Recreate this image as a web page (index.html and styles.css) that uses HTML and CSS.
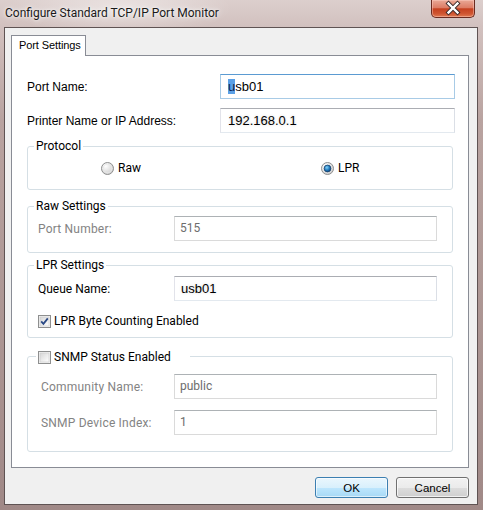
FILE: index.html
```html
<!DOCTYPE html>
<html>
<head>
<meta charset="utf-8">
<link rel="stylesheet" href="styles.css">
</head>
<body>
<div class="window">
  <div class="titlebar">
    <span class="title">Configure Standard TCP/IP Port Monitor</span>
    <div class="close">
      <svg width="44" height="18" viewBox="0 0 44 18">
        <path d="M17.5 4.5 L26.5 13.5 M26.5 4.5 L17.5 13.5" stroke="#3a2a2a" stroke-width="4.2" stroke-linecap="square" fill="none"/>
        <path d="M17.5 4.5 L26.5 13.5 M26.5 4.5 L17.5 13.5" stroke="#ffffff" stroke-width="2.4" stroke-linecap="square" fill="none"/>
      </svg>
    </div>
  </div>
  <div class="client">
    <div class="tabs"><div class="tab">Port Settings</div></div>
    <div class="panel">
      <div class="row">
        <span class="label sans">Port Name:</span>
        <div class="input focus wide"><span class="sel">u</span>sb01</div>
      </div>
      <div class="row row2">
        <span class="label sans">Printer Name or IP Address:</span>
        <div class="input wide blur">192.168.0.1</div>
      </div>

      <fieldset class="group protocol">
        <legend>Protocol</legend>
        <div class="radios">
          <label class="opt">
            <svg width="13" height="13" viewBox="0 0 13 13">
              <defs>
                <radialGradient id="rg" cx="0.35" cy="0.3" r="0.8">
                  <stop offset="0" stop-color="#ffffff"/>
                  <stop offset="1" stop-color="#c9c9c9"/>
                </radialGradient>
              </defs>
              <circle cx="6.5" cy="6.5" r="6" fill="url(#rg)" stroke="#8e8f8f"/>
              <circle cx="6.5" cy="6.5" r="4.3" fill="none" stroke="#e8e8e8" stroke-width="0.8"/>
            </svg>
            <span>Raw</span>
          </label>
          <label class="opt">
            <svg width="13" height="13" viewBox="0 0 13 13">
              <defs>
                <radialGradient id="rb" cx="0.4" cy="0.35" r="0.7">
                  <stop offset="0" stop-color="#7fd2f9"/>
                  <stop offset="0.6" stop-color="#1e74b8"/>
                  <stop offset="1" stop-color="#0d3f70"/>
                </radialGradient>
              </defs>
              <circle cx="6.5" cy="6.5" r="6" fill="url(#rg)" stroke="#8e8f8f"/>
              <circle cx="6.5" cy="6.5" r="3.4" fill="url(#rb)" stroke="#19426e" stroke-width="0.8"/>
            </svg>
            <span>LPR</span>
          </label>
        </div>
      </fieldset>

      <fieldset class="group raw">
        <legend>Raw Settings</legend>
        <div class="grow">
          <span class="dim">Port Number:</span>
          <div class="input disabled">515</div>
        </div>
      </fieldset>

      <fieldset class="group lpr">
        <legend>LPR Settings</legend>
        <div class="grow">
          <span>Queue Name:</span>
          <div class="input blur val">usb01</div>
        </div>
        <label class="check">
          <svg width="13" height="13" viewBox="0 0 13 13">
            <defs>
              <linearGradient id="cg" x1="0" y1="0" x2="1" y2="1">
                <stop offset="0" stop-color="#d6d6d6"/>
                <stop offset="1" stop-color="#ffffff"/>
              </linearGradient>
            </defs>
            <rect x="0.5" y="0.5" width="12" height="12" fill="#f4f4f4" stroke="#8e8f8f"/>
            <rect x="2" y="2" width="9" height="9" fill="url(#cg)" stroke="#c9c9c9" stroke-width="0.6"/>
            <path d="M3.2 6.4 L5.4 8.8 L9.8 3.4" stroke="#2b4a86" stroke-width="1.8" fill="none"/>
          </svg>
          <span>LPR Byte Counting Enabled</span>
        </label>
      </fieldset>

      <fieldset class="group snmp">
        <legend>
          <label class="check">
            <svg width="13" height="13" viewBox="0 0 13 13">
              <rect x="0.5" y="0.5" width="12" height="12" fill="#f4f4f4" stroke="#8e8f8f"/>
              <rect x="2" y="2" width="9" height="9" fill="url(#cg)" stroke="#c9c9c9" stroke-width="0.6"/>
            </svg>
            <span>SNMP Status Enabled</span>
          </label>
        </legend>
        <div class="grow ind">
          <span class="dim">Community Name:</span>
          <div class="input disabled">public</div>
        </div>
        <div class="grow ind second">
          <span class="dim">SNMP Device Index:</span>
          <div class="input disabled">1</div>
        </div>
      </fieldset>
    </div>
    <div class="buttons">
      <button class="btn default">OK</button>
      <button class="btn">Cancel</button>
    </div>
  </div>
</div>
</body>
</html>
```

FILE: styles.css
```css
* { box-sizing: border-box; }
html, body { margin: 0; padding: 0; }
body {
  width: 483px;
  height: 510px;
  overflow: hidden;
  font-family: Roboto, "Noto Sans", sans-serif;
  font-size: 12px;
  color: #000;
}
.window {
  width: 483px;
  height: 510px;
  display: flex;
  flex-direction: column;
  padding: 0 5px 5px 4px;
  background:
    radial-gradient(ellipse 160px 40px at 120px 8px, rgba(255,255,255,0.45), rgba(255,255,255,0) 70%),
    linear-gradient(to bottom, #dccfcd 0, #d2c1bf 26px, #b9a3a0 120px, #a08987 510px);
}
.titlebar {
  height: 27px;
  flex: none;
  display: flex;
  align-items: flex-start;
  padding-left: 1px;
}
.title {
  margin-top: 5px;
  line-height: 16px;
  font-size: 12px;
  color: #1a1a1a;
  text-shadow: 0 0 6px rgba(255,255,255,0.9), 0 0 3px rgba(255,255,255,0.9);
  flex: 1;
}
.close {
  width: 44px;
  height: 18px;
  margin-right: 3px;
  border: 1px solid #6a2b20;
  border-top: none;
  border-radius: 0 0 5px 5px;
  background: linear-gradient(to bottom, #e9a896 0, #dd7d65 45%, #c5401f 52%, #cf5531 80%, #e07a52 100%);
  box-shadow: inset 0 0 0 1px rgba(255,210,200,0.45);
  overflow: hidden;
}
.close svg { display: block; margin: -1px 0 0 -1px; }
.client {
  flex: 1;
  background: #f0f0f0;
  border: 1px solid #5f5353;
  padding: 7px 8px 0 6px;
  display: flex;
  flex-direction: column;
}
.tabs { display: flex; height: 20px; position: relative; z-index: 1; }
.tab {
  width: 75px;
  height: 21px;
  background: #fff;
  border: 1px solid #898c95;
  border-bottom: none;
  font-family: "Liberation Sans", Arial, sans-serif;
  font-size: 11px;
  letter-spacing: -0.1px;
  padding: 3px 0 0 7px;
}
.panel {
  width: 458px;
  height: 413px;
  background: #fff;
  border: 1px solid #898c95;
  padding: 18px 0 0 15px;
  display: flex;
  flex-direction: column;
}
.sans { font-family: "Liberation Sans", Arial, sans-serif; font-size: 12px; }
.row { display: flex; align-items: center; height: 25px; }
.row2 { margin-top: 9px; }
.row .label { width: 193px; }
.input {
  height: 25px;
  background: #fff;
  border: 1px solid;
  border-color: #abadb3 #dbdfe6 #e3e9ef #e2e3ea;
  font-family: "Liberation Sans", Arial, sans-serif;
  font-size: 13px;
  line-height: 23px;
  padding-left: 7px;
  white-space: nowrap;
}
.input.wide { width: 235px; }
.input.focus { border-color: #5b9bd2 #a8cbe6 #a8cbe6 #a8cbe6; }
.sel { background: #5aa0e6; color: #0b2250; }
.blur { text-shadow: 0 0 3px rgba(0,0,0,0.18); }
.input.disabled {
  font-family: Roboto, "Noto Sans", sans-serif;
  font-size: 12px;
  color: #6d6d6d;
  padding-left: 5px;
  border-color: #adb2b5 #dadada #dadada #dadada;
}
.input.val { padding-left: 6px; }
fieldset.group {
  margin: 0;
  padding: 0;
  width: 426px;
  border: 1px solid #d5dfe5;
  border-radius: 3px;
  min-width: 0;
}
legend {
  padding: 0 2px;
  margin-left: 6px;
  line-height: 15px;
  font-size: 12px;
}
.protocol { margin-top: 6px !important; padding-bottom: 13px !important; }
.radios {
  display: grid;
  grid-template-columns: 220px 1fr;
  padding: 7px 0 0 73px;
}
.opt { display: flex; align-items: center; gap: 4px; line-height: 15px; }
.opt svg, .check svg { display: block; flex: none; }
.raw { margin-top: 9px !important; padding-bottom: 11px !important; }
.grow {
  display: grid;
  grid-template-columns: 136px 263px;
  align-items: center;
  padding-left: 10px;
}
.raw .grow { margin-top: 2px; }
.dim { color: #838383; letter-spacing: 0.2px; }
.input.disabled { width: 263px; }
.grow .input { width: 263px; }
.lpr { margin-top: 5px !important; padding-bottom: 8px !important; }
.lpr .grow { margin-top: 3px; }
.check { display: flex; align-items: center; gap: 3px; line-height: 15px; }
.lpr .check { margin: 13px 0 0 10px; }
.snmp { margin-top: 10px !important; padding-bottom: 16px !important; }
.snmp legend { margin-left: 8px; padding: 2px 19px 0 2px; }
.grow.ind { padding-left: 13px; grid-template-columns: 133px 263px; margin-top: 9px; }
.grow.ind.second { margin-top: 11px; }
.buttons {
  display: flex;
  justify-content: flex-end;
  gap: 8px;
  margin-top: 9px;
  width: 458px;
}
.btn {
  width: 73px;
  height: 21px;
  border: 1px solid #707070;
  border-radius: 3px;
  background: linear-gradient(to bottom, #f2f2f2 0, #ebebeb 50%, #dddddd 51%, #cfcfcf 100%);
  box-shadow: inset 0 0 0 1px rgba(255,255,255,0.7);
  font-family: "Liberation Sans", Arial, sans-serif;
  font-size: 11.5px;
  color: #000;
  padding: 0;
}
.btn.default {
  border-color: #3c7fb1;
  background: linear-gradient(to bottom, #eaf6fd 0, #d9f0fc 50%, #bee6fd 51%, #a7d9f5 100%);
  box-shadow: inset 0 0 0 1px rgba(255,255,255,0.6);
}
```
